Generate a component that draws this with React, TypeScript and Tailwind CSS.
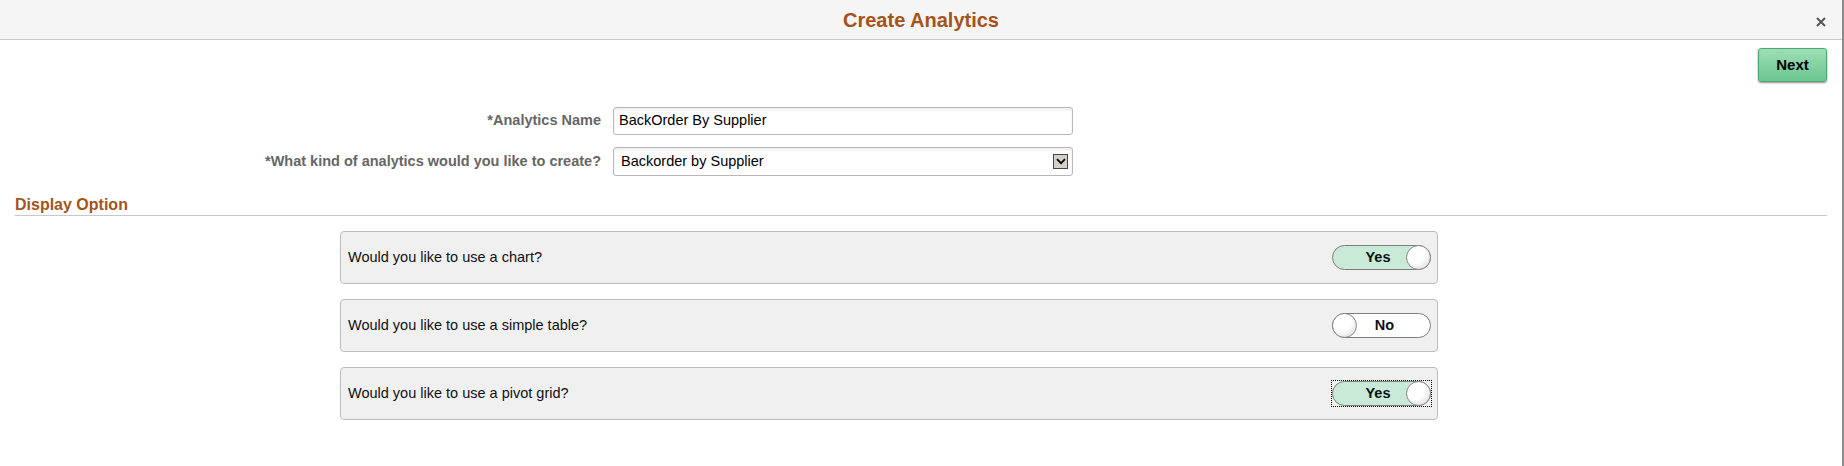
import React from "react";

function Toggle({ on, focused }: { on: boolean; focused?: boolean }) {
  const knob = (
    <span className="-m-px h-[25px] w-[25px] shrink-0 rounded-full border border-[#8a8a8a] bg-[radial-gradient(circle_at_35%_30%,#ffffff_45%,#d2d2d2_100%)]" />
  );
  const track = (
    <div
      className={`flex h-[25px] w-[99px] items-center rounded-full border border-[#7d7d7d] ${
        on ? "bg-[#c9ead7]" : "bg-white"
      }`}
    >
      {on ? (
        <>
          <span className="flex-1 pl-[16px] text-center text-[14.5px] font-bold text-[#111]">Yes</span>
          {knob}
        </>
      ) : (
        <>
          {knob}
          <span className="flex-1 pr-[17px] text-center text-[14.5px] font-bold text-[#111]">No</span>
        </>
      )}
    </div>
  );
  if (!focused) return track;
  // focus ring is a plain dotted rectangle, not following the pill radius
  return <div className="outline-1 outline-dotted outline-black">{track}</div>;
}

const questions = [
  { text: "Would you like to use a chart?", on: true },
  { text: "Would you like to use a simple table?", on: false },
  { text: "Would you like to use a pivot grid?", on: true, focused: true },
];

export default function App() {
  return (
    <div className="h-[466px] w-full overflow-hidden border-r-2 border-[#8c8c8c] bg-white font-['Liberation_Sans',Arial,sans-serif] text-black">
      <div className="relative flex h-[40px] items-center justify-center border-b border-[#c8c8c8] bg-[#f5f5f5]">
        <h1 className="text-[20px] font-bold text-[#a4541a]">Create Analytics</h1>
        <svg
          className="absolute right-[16px] top-[17px]"
          width="10"
          height="10"
          viewBox="0 0 10 10"
        >
          <path d="M1 1L9 9M9 1L1 9" stroke="#555" strokeWidth="2" />
        </svg>
      </div>

      <div className="flex justify-end pr-[15px] pt-[8px]">
        <button
          type="button"
          className="h-[34px] w-[69px] rounded-[3px] border border-[#4fa672] bg-[linear-gradient(#9ddfb5,#6cc590)] text-[15px] font-bold text-black shadow-[0_1px_2px_rgba(0,0,0,0.45)]"
        >
          Next
        </button>
      </div>

      <div className="mt-[25px] flex flex-col gap-[12px]">
        <div className="flex items-center">
          <label className="w-[613px] pr-[12px] text-right text-[14.5px] font-bold text-[#666]">
            *Analytics Name
          </label>
          <div className="flex h-[28px] w-[460px] items-center rounded-[3px] border border-[#b8b8b8] bg-white px-[5px] text-[14.5px] shadow-[inset_0_2px_3px_rgba(0,0,0,0.08)]">
            BackOrder By Supplier
          </div>
        </div>
        <div className="flex items-center">
          <label className="w-[613px] pr-[12px] text-right text-[14.5px] font-bold text-[#666]">
            *What kind of analytics would you like to create?
          </label>
          <div className="flex h-[29px] w-[460px] items-center justify-between rounded-[3px] border border-[#b8b8b8] bg-white pl-[7px] pr-[4px] text-[14.5px] shadow-[inset_0_2px_3px_rgba(0,0,0,0.08)]">
            <span>Backorder by Supplier</span>
            <span className="flex h-[15px] w-[15px] items-center justify-center border border-[#444] bg-[#d4d0c8]">
              <svg width="10" height="7" viewBox="0 0 10 7">
                <path d="M1 1.2L5 5.2L9 1.2" stroke="#000" strokeWidth="1.8" fill="none" />
              </svg>
            </span>
          </div>
        </div>
      </div>

      <div className="mx-[15px] mt-[19px] h-[21px] border-b border-[#c8c8c8] text-[16px] font-bold leading-[20px] text-[#a4541a]">
        Display Option
      </div>

      <div className="mt-[15px] flex flex-col gap-[15px] pl-[340px]">
        {questions.map((q) => (
          <div
            key={q.text}
            className="flex h-[53px] w-[1098px] items-center justify-between rounded-[4px] border border-[#bcbcbc] bg-[#f0f0f0] pl-[7px] pr-[6px]"
          >
            <span className="text-[14.5px] text-[#111]">{q.text}</span>
            <Toggle on={q.on} focused={q.focused} />
          </div>
        ))}
      </div>
    </div>
  );
}
